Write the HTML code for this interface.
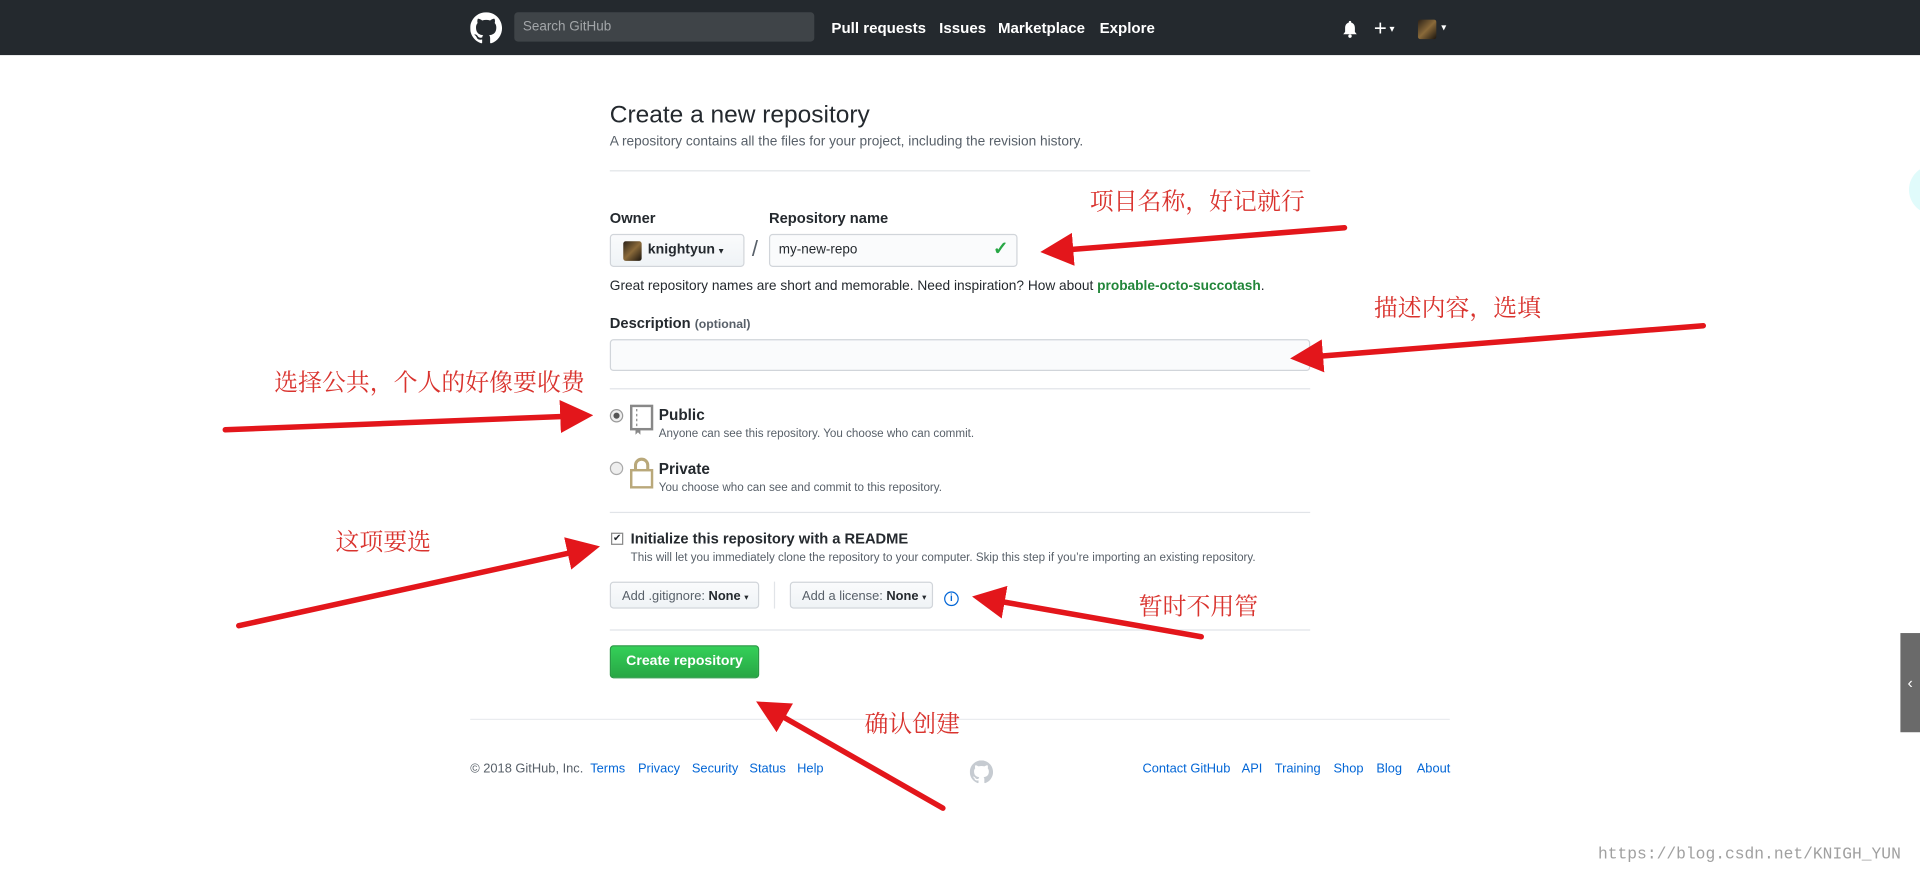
<!DOCTYPE html>
<html><head><meta charset="utf-8"><style>
html,body{margin:0;padding:0;background:#fff;overflow:hidden;width:1920px;height:876px}
#w{position:absolute;left:0;top:0;width:1568px;height:715px;transform:scale(1.22449);transform-origin:0 0;font-family:"Liberation Sans",sans-serif;color:#24292e}
.a{position:absolute;white-space:nowrap}
.hd{position:absolute;left:0;top:0;width:1568px;height:45px;background:#24292e}
.nav{color:#fff;font-weight:bold;font-size:12.3px;top:16px}
.hr{position:absolute;height:1px;background:#e1e4e8}
.lbl{font-weight:bold;font-size:12px}
.btn{position:absolute;border:1px solid #d1d5da;border-radius:3px;background:linear-gradient(#fafbfc,#eff3f6);box-sizing:border-box;font-size:10.5px;color:#586069}
.cn{font-family:"Noto Serif CJK SC","Liberation Serif",serif;color:#d9332e;font-size:19.5px}
.ft{font-size:10.5px;color:#0366d6;top:622px}
</style></head><body><div id="w">
<div class="hd"></div>
<svg class="a" style="left:384px;top:10px" width="26" height="26" viewBox="0 0 16 16"><path fill="#fff" d="M8 0C3.58 0 0 3.58 0 8c0 3.54 2.29 6.530 5.470 7.590.4.07.55-.17.55-.38 0-.19-.01-.82-.01-1.49-2.010.37-2.530-.49-2.690-.94-.09-.23-.48-.94-.82-1.130-.28-.15-.68-.52-.01-.53.63-.01 1.080.58 1.230.82.72 1.210 1.870.87 2.330.66.07-.52.28-.87.51-1.070-1.780-.2-3.640-.89-3.640-3.950 0-.87.31-1.590.82-2.150-.08-.2-.36-1.020.08-2.120 0 0 .67-.21 2.2.82.64-.18 1.320-.27 2-.27.68 0 1.360.09 2 .27 1.530-1.040 2.2-.82 2.2-.82.44 1.1.16 1.920.08 2.120.51.56.82 1.270.82 2.150 0 3.070-1.870 3.750-3.650 3.950.29.25.54.73.54 1.480 0 1.070-.01 1.930-.01 2.2 0 .21.15.46.55.38A8.013 8.013 0 0016 8c0-4.42-3.58-8-8-8z"/></svg>
<div class="a" style="left:420px;top:10px;width:245px;height:24px;background:#3f4448;border-radius:3px"></div>
<div class="a" style="left:427px;top:16px;font-size:11px;color:#a3a6a9">Search GitHub</div>
<div class="a nav" style="left:679px">Pull requests</div>
<div class="a nav" style="left:767px">Issues</div>
<div class="a nav" style="left:815px">Marketplace</div>
<div class="a nav" style="left:898px">Explore</div>
<svg class="a" style="left:1096px;top:16px" width="13" height="15" viewBox="0 0 13 15"><path d="M6.5 1a1 1 0 011 1v.5C9.5 3 10.5 4.5 10.5 7v3l1.5 2H1l1.5-2V7C2.5 4.5 3.5 3 5.5 2.5V2a1 1 0 011-1z" fill="#fff"/><circle cx="6.5" cy="13.5" r="1.4" fill="#fff"/></svg>
<div class="a" style="left:1122px;top:13px;color:#fff;font-size:18px">+<span style="font-size:8px;vertical-align:3px"> ▾</span></div>
<div class="a" style="left:1158px;top:16px;width:15px;height:16px;background:linear-gradient(135deg,#2a2118,#8a6a3a,#1a140e);border-radius:2px"></div>
<div class="a" style="left:1177px;top:18px;color:#fff;font-size:8px">▾</div>

<div class="a" style="left:498px;top:83px;font-size:20px;color:#24292e">Create a new repository</div>
<div class="a" style="left:498px;top:110px;font-size:11.2px;color:#586069">A repository contains all the files for your project, including the revision history.</div>
<div class="hr" style="left:498px;top:139px;width:572px"></div>
<div class="a lbl" style="left:498px;top:171px">Owner</div>
<div class="a lbl" style="left:628px;top:171px">Repository name</div>
<div class="btn" style="left:498px;top:191px;width:110px;height:27px"></div>
<div class="a" style="left:509px;top:197px;width:15px;height:16px;background:linear-gradient(135deg,#2a2118,#8a6a3a,#1a140e);border-radius:2px"></div>
<div class="a" style="left:529px;top:198px;font-size:11.5px;font-weight:bold;color:#24292e">knightyun <span style="font-size:7px">▾</span></div>
<div class="a" style="left:614px;top:193px;font-size:18px;color:#586069">/</div>
<div class="a" style="left:628px;top:191px;width:203px;height:27px;border:1px solid #d1d5da;border-radius:3px;box-sizing:border-box;background:#fafbfc"></div>
<div class="a" style="left:636px;top:198px;font-size:11px;color:#24292e">my-new-repo</div>
<div class="a" style="left:811px;top:194px;font-size:15px;color:#28a745;font-weight:bold">✓</div>
<div class="a" style="left:498px;top:228px;font-size:11.2px;color:#24292e">Great repository names are short and memorable. Need inspiration? How about <b style="color:#22863a">probable-octo-succotash</b>.</div>
<div class="a lbl" style="left:498px;top:257px">Description <span style="font-size:10px;color:#586069">(optional)</span></div>
<div class="a" style="left:498px;top:277px;width:572px;height:26px;border:1px solid #d1d5da;border-radius:3px;box-sizing:border-box;background:#fafbfc"></div>
<div class="hr" style="left:498px;top:317px;width:572px"></div>
<div class="a" style="left:498px;top:334px;width:9px;height:9px;border:1px solid #999;border-radius:50%;background:#eee"></div>
<div class="a" style="left:501px;top:337px;width:5px;height:5px;border-radius:50%;background:#555"></div>
<svg class="a" style="left:514px;top:330px" width="20" height="26" viewBox="0 0 20 26"><rect x="1.5" y="1.5" width="17" height="19" fill="none" stroke="#888" stroke-width="2"/><path d="M6 4v14" stroke="#888" stroke-dasharray="2 2"/><path d="M5 20v5l2-2 2 2v-5" fill="#888"/></svg>
<div class="a" style="left:538px;top:332px;font-size:12.5px;font-weight:bold">Public</div>
<div class="a" style="left:538px;top:349px;font-size:9.5px;color:#586069">Anyone can see this repository. You choose who can commit.</div>
<div class="a" style="left:498px;top:377px;width:9px;height:9px;border:1px solid #aaa;border-radius:50%;background:#eee"></div>
<svg class="a" style="left:514px;top:373px" width="20" height="26" viewBox="0 0 20 26"><path d="M5 11V7a5 5 0 0110 0v4" fill="none" stroke="#b9a87a" stroke-width="2.5"/><rect x="1.5" y="11" width="17" height="14" fill="#fff" stroke="#b9a87a" stroke-width="2"/></svg>
<div class="a" style="left:538px;top:376px;font-size:12.5px;font-weight:bold">Private</div>
<div class="a" style="left:538px;top:393px;font-size:9.5px;color:#586069">You choose who can see and commit to this repository.</div>
<div class="hr" style="left:498px;top:418px;width:572px"></div>
<div class="a" style="left:499px;top:435px;width:8px;height:8px;border:1px solid #888;background:#fff;font-size:8px;line-height:8px;text-align:center">✔</div>
<div class="a" style="left:515px;top:433px;font-size:12px;font-weight:bold">Initialize this repository with a README</div>
<div class="a" style="left:515px;top:450px;font-size:9.5px;color:#586069">This will let you immediately clone the repository to your computer. Skip this step if you’re importing an existing repository.</div>
<div class="btn" style="left:498px;top:475px;width:122px;height:22px;padding:5px 0 0 9px">Add .gitignore: <b style="color:#24292e">None</b> <span style="font-size:7px;color:#24292e">▾</span></div>
<div class="a" style="left:632px;top:475px;width:1px;height:22px;background:#e1e4e8"></div>
<div class="btn" style="left:645px;top:475px;width:117px;height:22px;padding:5px 0 0 9px">Add a license: <b style="color:#24292e">None</b> <span style="font-size:7px;color:#24292e">▾</span></div>
<div class="a" style="left:771px;top:483px;width:10px;height:10px;border:1px solid #0366d6;border-radius:50%;font-size:8px;line-height:10px;text-align:center;color:#0366d6;font-weight:bold">i</div>
<div class="hr" style="left:498px;top:514px;width:572px"></div>
<div class="a" style="left:498px;top:527px;width:122px;height:27px;border-radius:3px;background:linear-gradient(#34d058,#28a745);border:1px solid #2a9a45;box-sizing:border-box;color:#fff;font-weight:bold;font-size:11.5px;text-align:center;line-height:25px">Create repository</div>
<div class="hr" style="left:384px;top:587px;width:800px;background:#eaecef"></div>
<div class="a ft" style="left:384px;color:#586069">© 2018 GitHub, Inc.</div>
<div class="a ft" style="left:482px">Terms</div>
<div class="a ft" style="left:521px">Privacy</div>
<div class="a ft" style="left:565px">Security</div>
<div class="a ft" style="left:612px">Status</div>
<div class="a ft" style="left:651px">Help</div>
<svg class="a" style="left:792px;top:621px" width="19" height="19" viewBox="0 0 16 16"><path fill="#c6cbd1" d="M8 0C3.58 0 0 3.58 0 8c0 3.54 2.29 6.530 5.470 7.590.4.07.55-.17.55-.38 0-.19-.01-.82-.01-1.49-2.010.37-2.530-.49-2.690-.94-.09-.23-.48-.94-.82-1.130-.28-.15-.68-.52-.01-.53.63-.01 1.080.58 1.230.82.72 1.210 1.870.87 2.330.66.07-.52.28-.87.51-1.070-1.780-.2-3.640-.89-3.640-3.950 0-.87.31-1.590.82-2.150-.08-.2-.36-1.020.08-2.120 0 0 .67-.21 2.2.82.64-.18 1.320-.27 2-.27.68 0 1.360.09 2 .27 1.530-1.040 2.2-.82 2.2-.82.44 1.1.16 1.920.08 2.120.51.56.82 1.270.82 2.150 0 3.070-1.870 3.750-3.650 3.950.29.25.54.73.54 1.480 0 1.070-.01 1.930-.01 2.2 0 .21.15.46.55.38A8.013 8.013 0 0016 8c0-4.42-3.58-8-8-8z"/></svg>
<div class="a ft" style="left:933px">Contact GitHub</div>
<div class="a ft" style="left:1014px">API</div>
<div class="a ft" style="left:1041px">Training</div>
<div class="a ft" style="left:1089px">Shop</div>
<div class="a ft" style="left:1124px">Blog</div>
<div class="a ft" style="left:1157px">About</div>

<div class="a" style="left:1552px;top:517px;width:16px;height:81px;background:#6a6a6a;color:#fff;font-size:13px;line-height:81px;text-align:center">‹</div>
<div class="a" style="left:1559px;top:135px;width:40px;height:40px;border-radius:50%;background:#e0fbfb"></div>
<div class="a" style="left:1305px;top:690px;font-family:'Liberation Mono',monospace;font-size:13.3px;color:#a0a0a0">https://blog.csdn.net/KNIGH_YUN</div>

<div class="a cn" style="left:890px;top:149px">项目名称，好记就行</div>
<div class="a cn" style="left:1122px;top:236px">描述内容，选填</div>
<div class="a cn" style="left:224px;top:297px">选择公共，个人的好像要收费</div>
<div class="a cn" style="left:274px;top:427px">这项要选</div>
<div class="a cn" style="left:930px;top:480px">暂时不用管</div>
<div class="a cn" style="left:706px;top:576px">确认创建</div>

<svg class="a" style="left:0;top:0" width="1568" height="715">
<defs><marker id="h" markerWidth="6" markerHeight="6" refX="1" refY="3" orient="auto" markerUnits="strokeWidth"><path d="M0,0 L6,3 L0,6z" fill="#e3161b"/></marker></defs>
<g stroke="#e3161b" stroke-width="4.5" stroke-linecap="round" marker-end="url(#h)" fill="none">
<line x1="1098" y1="186" x2="872" y2="204"/>
<line x1="1391" y1="266" x2="1076" y2="291"/>
<line x1="184" y1="351" x2="462" y2="340"/>
<line x1="195" y1="511" x2="468" y2="451"/>
<line x1="981" y1="520" x2="816" y2="491"/>
<line x1="770" y1="660" x2="637" y2="584"/>
</g></svg>
</div></body></html>
